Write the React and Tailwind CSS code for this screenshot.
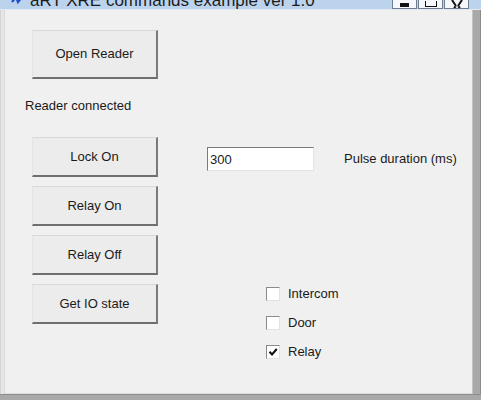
import { useState } from "react";

function WinButton({ label, tall }) {
  return (
    <button
      className={`w-[126px] ${tall ? "h-[49px]" : "h-[40px]"} bg-[#ececec] border-t border-l border-t-[#d8d8d8] border-l-[#e4e4e4] border-b-2 border-r-2 border-b-[#6f6f6f] border-r-[#7a7a7a] text-[13px] text-[#1a1a1a] flex items-center justify-center`}
    >
      {label}
    </button>
  );
}

function CheckRow({ label, checked }) {
  return (
    <label className="flex items-center h-[16px] gap-[8px] text-[13px] text-[#1a1a1a]">
      <span className="w-[14px] h-[14px] bg-white border border-t-[#8a8a8a] border-l-[#8a8a8a] border-b-[#e2e2e2] border-r-[#e2e2e2] flex items-center justify-center">
        {checked && (
          <svg width="10" height="10" viewBox="0 0 10 10">
            <path d="M1.5 4.8 L4 7.5 L8.8 2" fill="none" stroke="#111" strokeWidth="2" />
          </svg>
        )}
      </span>
      {label}
    </label>
  );
}

function TitleButtons() {
  return (
    <div className="flex gap-[1px] ml-auto mr-[12px]">
      <div className="w-[25px] h-[9px] bg-[#f4f7fb] border border-t-0 border-[#6f7d8e] flex justify-center items-end pb-[1px]">
        <div className="w-[9px] h-[4px] bg-[#111]" />
      </div>
      <div className="w-[25px] h-[9px] bg-[#f4f7fb] border border-t-0 border-[#6f7d8e] flex justify-center items-end pb-[1px]">
        <div className="w-[12px] h-[6px] border-[1.5px] border-t-0 border-[#111]" />
      </div>
      <div className="w-[25px] h-[9px] bg-[#f4f7fb] border border-t-0 border-[#6f7d8e] flex justify-center items-end">
        <svg width="12" height="8" viewBox="0 0 12 8">
          <path d="M1 0 L5 6 M11 0 L7 6 M5 6 L3 8 M7 6 L9 8" stroke="#111" strokeWidth="2" fill="none" />
        </svg>
      </div>
    </div>
  );
}

export default function App() {
  const [pulse, setPulse] = useState("300");

  return (
    <div className="w-[500px] h-[400px] bg-white overflow-hidden" style={{ fontFamily: '"Liberation Sans", Arial, sans-serif' }}>
      <div className="w-[481px] h-[400px] flex flex-col">
        {/* Title bar (cut off at the top) */}
        <div className="h-[9px] bg-[#bcd3ee] overflow-hidden flex items-start">
          <div className="flex items-center -mt-[8px] h-[18px] pl-[10px]">
            <svg width="14" height="14" viewBox="0 0 14 14" className="mt-[-2px]">
              <path d="M2 9 L6 4 L8 9 L12 4" stroke="#1f4fc8" strokeWidth="2.2" fill="none" />
            </svg>
            <span className="ml-[6px] text-[17px] leading-[18px] text-[#1c1c1c] whitespace-nowrap">
              aRT XRE commands example ver 1.0
            </span>
          </div>
          <TitleButtons />
        </div>
        <div className="h-[1px] bg-[#dfe8f3]" />

        <div className="flex flex-1">
          <div className="w-[5px] bg-[#e6e6e6] border-l border-r border-l-[#d4d4d4] border-r-[#d9d9d9]" />

          {/* Form body */}
          <div className="w-[467px] bg-[#f0f0f0] flex flex-col">
            <div className="flex flex-1">
              <div className="pl-[27px] pt-[20px] flex flex-col">
                <WinButton label="Open Reader" tall />
                <div className="-ml-[7px] mt-[19px] h-[16px] leading-[16px] text-[13px] text-[#1a1a1a]">
                  Reader connected
                </div>
                <div className="mt-[23px] flex flex-col gap-[9px]">
                  <WinButton label="Lock On" />
                  <WinButton label="Relay On" />
                  <WinButton label="Relay Off" />
                  <WinButton label="Get IO state" />
                </div>
              </div>

              <div className="pl-[49px] pt-[137px] flex flex-col">
                <div className="flex items-center">
                  <input
                    value={pulse}
                    onChange={(e) => setPulse(e.target.value)}
                    className="w-[107px] h-[24px] bg-white border border-t-[#7a7a7a] border-l-[#7a7a7a] border-b-[#e3e3e3] border-r-[#e3e3e3] px-[2px] text-[13px] text-[#1a1a1a] outline-none"
                  />
                  <span className="ml-[30px] text-[13px] text-[#1a1a1a] whitespace-nowrap">
                    Pulse duration (ms)
                  </span>
                </div>
                <div className="ml-[59px] mt-[115px] flex flex-col gap-[13px]">
                  <CheckRow label="Intercom" />
                  <CheckRow label="Door" />
                  <CheckRow label="Relay" checked />
                </div>
              </div>
            </div>
            <div className="h-[6px] bg-[#f0f0f0] border-b border-b-[#dcdcdc]" />
          </div>

          <div className="w-[9px] bg-[#a9a9a9] border-l border-r border-l-[#c4c4c4] border-r-[#8c8c8c]" />
        </div>
        <div className="h-[6px] bg-[#a9a9a9] border-t border-t-[#8e8e8e]" />
      </div>
    </div>
  );
}
